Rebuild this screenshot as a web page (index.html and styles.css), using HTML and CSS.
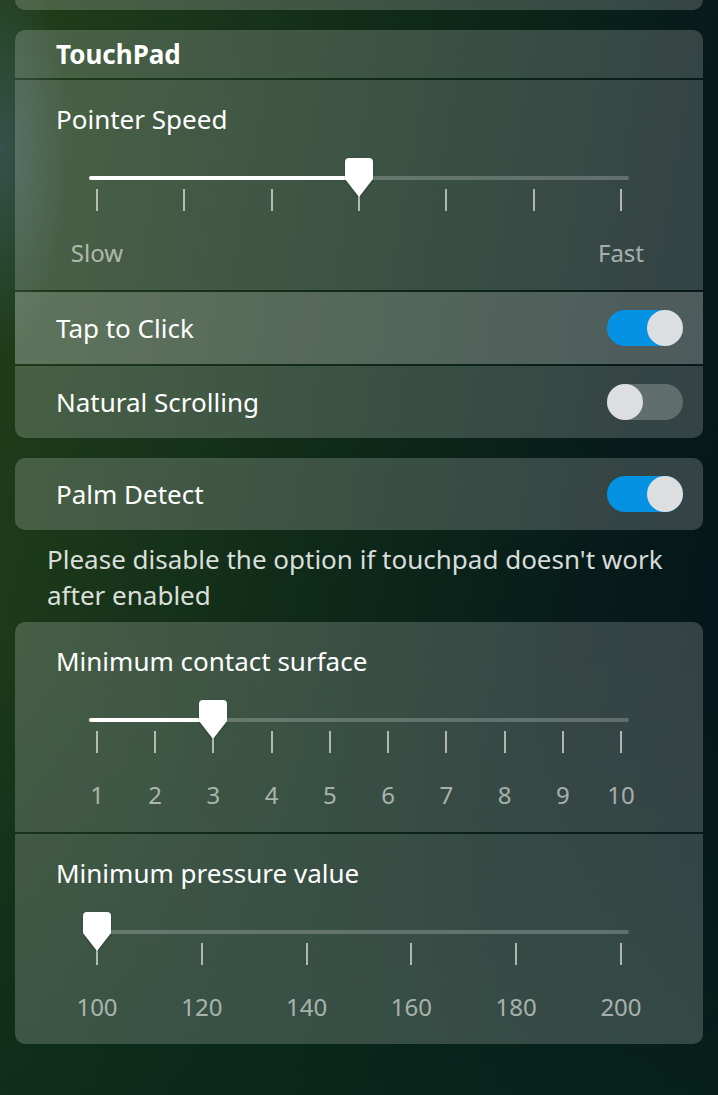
FILE: index.html
```html
<!DOCTYPE html>
<html>
<head>
<meta charset="utf-8">
<link rel="stylesheet" href="styles.css">
</head>
<body>
<div class="page">
  <div class="group tail"></div>

  <div class="group">
    <div class="row header"><span class="title">TouchPad</span></div>
    <div class="row slider-row">
      <div class="label">Pointer Speed</div>
      <div class="slider">
        <div class="track-area">
          <div class="track"><div class="fill" style="width:270px"></div></div>
          <svg class="handle" style="left:256px" width="28" height="40" viewBox="0 0 28 40"><path d="M4 0H24Q28 0 28 4V21L14 39L0 21V4Q0 0 4 0Z"/></svg>
        </div>
        <div class="ticks"><i></i><i></i><i></i><i></i><i></i><i></i><i></i></div>
        <div class="marks"><span>Slow</span><span>Fast</span></div>
      </div>
    </div>
    <div class="row switch-row hover">
      <span class="label">Tap to Click</span>
      <span class="switch on"><span class="knob"></span></span>
    </div>
    <div class="row switch-row">
      <span class="label">Natural Scrolling</span>
      <span class="switch"><span class="knob"></span></span>
    </div>
  </div>

  <div class="group tight">
    <div class="row switch-row">
      <span class="label">Palm Detect</span>
      <span class="switch on"><span class="knob"></span></span>
    </div>
  </div>

  <p class="note">Please disable the option if touchpad doesn't work after enabled</p>

  <div class="group">
    <div class="row slider-row">
      <div class="label">Minimum contact surface</div>
      <div class="slider">
        <div class="track-area">
          <div class="track"><div class="fill" style="width:124px"></div></div>
          <svg class="handle" style="left:110px" width="28" height="40" viewBox="0 0 28 40"><path d="M4 0H24Q28 0 28 4V21L14 39L0 21V4Q0 0 4 0Z"/></svg>
        </div>
        <div class="ticks"><i></i><i></i><i></i><i></i><i></i><i></i><i></i><i></i><i></i><i></i></div>
        <div class="marks"><span>1</span><span>2</span><span>3</span><span>4</span><span>5</span><span>6</span><span>7</span><span>8</span><span>9</span><span>10</span></div>
      </div>
    </div>
    <div class="row slider-row">
      <div class="label">Minimum pressure value</div>
      <div class="slider">
        <div class="track-area">
          <div class="track"><div class="fill" style="width:8px"></div></div>
          <svg class="handle" style="left:-6px" width="28" height="40" viewBox="0 0 28 40"><path d="M4 0H24Q28 0 28 4V21L14 39L0 21V4Q0 0 4 0Z"/></svg>
        </div>
        <div class="ticks"><i></i><i></i><i></i><i></i><i></i><i></i></div>
        <div class="marks"><span>100</span><span>120</span><span>140</span><span>160</span><span>180</span><span>200</span></div>
      </div>
    </div>
  </div>
</div>
</body>
</html>
```

FILE: styles.css
```css
html, body {
  margin: 0;
  padding: 0;
}
body {
  width: 718px;
  height: 1095px;
  overflow: hidden;
  font-family: "Noto Sans", "Open Sans", sans-serif;
  color: #fff;
  background:
    radial-gradient(ellipse 70px 200px at 0px 150px, rgba(70,100,120,0.55), rgba(70,100,120,0) 100%),
    linear-gradient(180deg, rgba(0,0,0,0) 60%, rgba(8,40,28,0.6) 100%),
    linear-gradient(100deg, #213f17 0%, #17341a 25%, #0d2819 50%, #071c1a 75%, #04131a 100%);
}
.page {
  padding: 0 15px;
  display: flex;
  flex-direction: column;
}
.group {
  display: flex;
  flex-direction: column;
  gap: 2px;
  border-radius: 10px;
  overflow: hidden;
  margin-bottom: 20px;
}
.group.tight {
  margin-bottom: 0;
}
.group.tail {
  height: 10px;
  border-radius: 0 0 10px 10px;
  background: rgba(255,255,255,0.19);
}
.row {
  background: rgba(255,255,255,0.19);
}
.row.hover {
  background: rgba(255,255,255,0.29);
}
.header {
  height: 48px;
  display: flex;
  align-items: center;
  padding-left: 41px;
}
.title {
  font-size: 26px;
  font-weight: 700;
  line-height: 36px;
}
.label {
  font-size: 26px;
  line-height: 36px;
}
.switch-row {
  height: 72px;
  display: flex;
  align-items: center;
  justify-content: space-between;
  padding: 0 20px 0 41px;
}
.switch {
  width: 76px;
  height: 36px;
  border-radius: 18px;
  background: rgba(150,160,160,0.45);
  display: flex;
  justify-content: flex-start;
}
.switch.on {
  background: #0592e2;
  justify-content: flex-end;
}
.knob {
  width: 36px;
  height: 36px;
  border-radius: 50%;
  background: #dcdee0;
}
.slider-row {
  padding: 21px 0 22px 0;
}
.slider-row > .label {
  padding-left: 41px;
}
.slider {
  margin: 21px 74px 0 74px;
}
.track-area {
  position: relative;
  height: 31px;
}
.track {
  position: absolute;
  left: 0;
  right: 0;
  top: 18px;
  height: 4px;
  border-radius: 2px;
  background: rgba(255,255,255,0.22);
}
.fill {
  height: 4px;
  border-radius: 2px;
  background: #fff;
}
.handle {
  position: absolute;
  top: 0;
  fill: #fff;
  filter: drop-shadow(0 1px 1px rgba(0,0,0,0.25));
}
.ticks {
  height: 22px;
  display: flex;
  justify-content: space-between;
  padding: 0 7px;
}
.ticks i {
  width: 2px;
  height: 22px;
  background: rgba(255,255,255,0.6);
}
.marks {
  margin-top: 27px;
  height: 30px;
  display: flex;
  justify-content: space-between;
  padding: 0 8px;
}
.marks span {
  width: 0;
  display: flex;
  justify-content: center;
  white-space: nowrap;
  font-size: 24px;
  line-height: 30px;
  color: rgba(255,255,255,0.58);
}
.note {
  margin: 11px 0 9px 0;
  padding: 0 20px 0 32px;
  font-size: 26px;
  line-height: 36px;
  color: rgba(255,255,255,0.85);
}
```
